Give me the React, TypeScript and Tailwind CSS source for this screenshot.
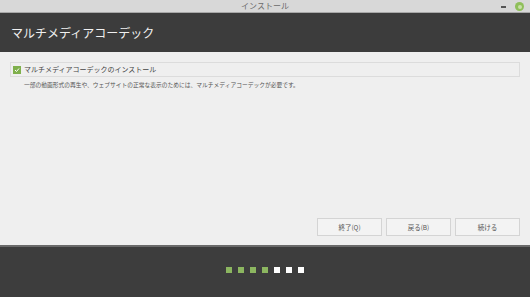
import React from "react";

export default function App() {
  const font = { fontFamily: '"Noto Sans CJK JP", "Noto Sans", sans-serif' };
  return (
    <div className="w-[530px] h-[297px] flex flex-col bg-[#efefef] overflow-hidden" style={font}>
      <div className="h-[13px] bg-[#d8d8d8] border-b border-[#a8a8a8] relative flex items-center justify-center">
        <span className="text-[8px] leading-none text-[#6a6a6a]">インストール</span>
        <div className="absolute right-[6px] top-[2px] flex items-center gap-[9px]">
          <div className="w-[5px] h-[2px] bg-[#555]" />
          <div className="w-[9px] h-[9px] rounded-full bg-[#8fbf5a] flex items-center justify-center">
            <div className="w-[4px] h-[4px] rounded-full bg-[#c9e0a8]" />
          </div>
        </div>
      </div>
      <div className="h-[39px] bg-[#3c3c3c] flex items-center pl-[11px]">
        <span className="text-[12px] leading-none text-[#f0f0f0]">マルチメディアコーデック</span>
      </div>
      <div className="flex-1 flex flex-col px-[10px] pt-[10px]">
        <div className="h-[15px] border border-[#dcdcdc] flex items-center pl-[2px] gap-[3px]">
          <div className="w-[8px] h-[8px] bg-[#7fb04c] flex items-center justify-center">
            <svg width="6" height="6" viewBox="0 0 6 6"><path d="M1 3 L2.5 4.5 L5 1.5" stroke="#fff" strokeWidth="1" fill="none" /></svg>
          </div>
          <span className="text-[7px] leading-none text-[#444]">マルチメディアコーデックのインストール</span>
        </div>
        <div className="pl-[14px] mt-[5px] text-[5.75px] leading-none text-[#555]">
          一部の動画形式の再生や、ウェブサイトの正常な表示のためには、マルチメディアコーデックが必要です。
        </div>
        <div className="flex-1" />
        <div className="flex justify-end gap-[4px] mb-[9px]">
          {["終了(Q)", "戻る(B)", "続ける"].map((t) => (
            <div key={t} className="w-[65px] h-[18px] border border-[#d4d4d4] bg-[#f3f3f3] flex items-center justify-center text-[6.5px] text-[#555] leading-none">
              {t}
            </div>
          ))}
        </div>
      </div>
      <div className="h-[52px] bg-[#3d3d3d] border-t-2 border-[#6a6a6a] flex justify-center pt-[20px]">
        <div className="flex gap-[6px]">
          {[0, 1, 2, 3, 4, 5, 6].map((i) => (
            <div key={i} className={i < 4 ? "w-[6px] h-[6px] bg-[#8cb660]" : "w-[6px] h-[6px] bg-white"} />
          ))}
        </div>
      </div>
    </div>
  );
}
